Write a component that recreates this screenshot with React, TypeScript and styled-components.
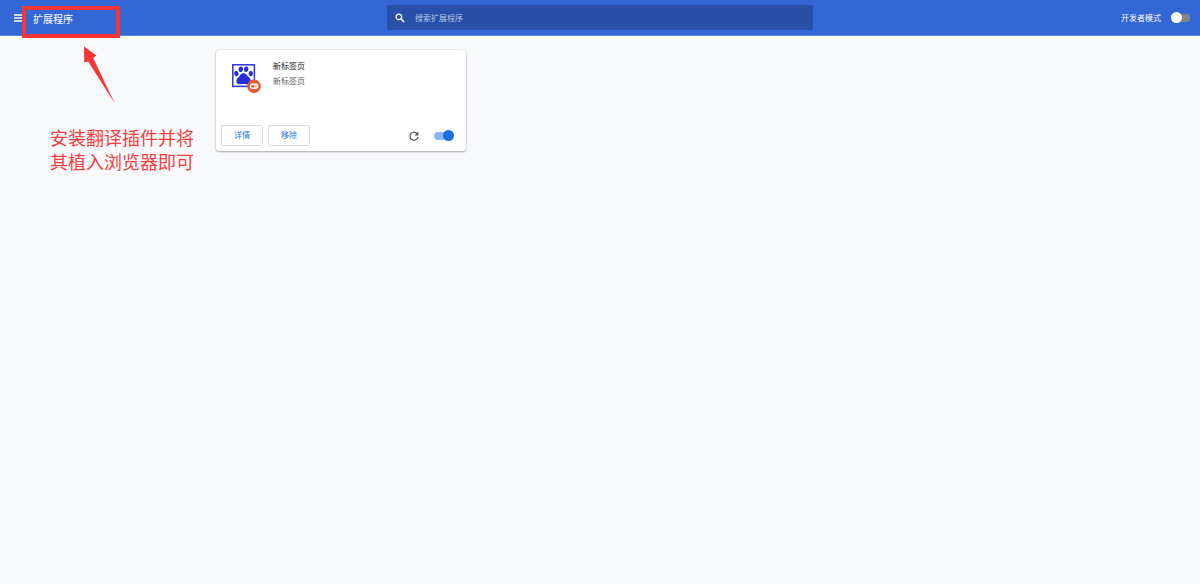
import React from "react";
import styled, { createGlobalStyle } from "styled-components";

const GlobalStyle = createGlobalStyle`
  *, *::before, *::after { box-sizing: border-box; }
  html, body { margin: 0; padding: 0; background: #f8f9fb; }
  body, button, input {
    font-family: "Noto Sans CJK SC", "Liberation Sans", sans-serif;
    font-size: 8px;
  }
`;

const Page = styled.div`
  position: relative;
  min-height: 100vh;
`;

const Toolbar = styled.header`
  display: grid;
  grid-template-columns: 1fr minmax(0, 426px) 1fr;
  align-items: center;
  height: 36px;
  padding: 0 9px;
  background: #3367d6;
  border-bottom: 1px solid #5c86de;
  color: #fff;
`;

const Brand = styled.div`
  display: flex;
  align-items: center;
  gap: 10px;
  padding-left: 4px;
`;

const MenuButton = styled.button`
  display: flex;
  padding: 0;
  border: 0;
  background: none;
  color: inherit;
  cursor: pointer;
`;

const Title = styled.h1`
  margin: 0;
  padding-top: 2px;
  font-size: 10px;
  font-weight: 400;
  line-height: 16px;
`;

const SearchBox = styled.label`
  display: flex;
  align-items: center;
  gap: 10px;
  height: 25px;
  padding: 0 8px;
  border-radius: 1px;
  background: #2950a8;
`;

const SearchInput = styled.input`
  flex: 1;
  min-width: 0;
  height: 16px;
  padding: 0;
  border: 0;
  outline: 0;
  background: none;
  color: #fff;
  &::placeholder { color: #b4c4e6; opacity: 1; }
`;

const DevMode = styled.label`
  display: flex;
  justify-content: flex-end;
  align-items: center;
  gap: 10px;
  line-height: 16px;
`;

const Switch = styled.input<{ $track: string; $knob: string }>`
  appearance: none;
  display: flex;
  align-items: center;
  width: 20px;
  height: 11px;
  margin: 0;
  cursor: pointer;
  &::before {
    content: "";
    flex: none;
    width: 17px;
    height: 8px;
    margin-left: 2px;
    border-radius: 4px;
    background: ${(p) => p.$track};
  }
  &::after {
    content: "";
    flex: none;
    width: 11px;
    height: 11px;
    margin-left: -19px;
    border-radius: 50%;
    background: ${(p) => p.$knob};
  }
  &:checked::before { margin-left: 0; }
  &:checked::after { margin-left: -8px; }
`;

const CardGrid = styled.main`
  display: grid;
  grid-template-columns: repeat(auto-fill, 250px);
  gap: 9px;
  max-width: 768px;
  margin: 0 auto;
  padding-top: 14px;
`;

const Card = styled.article`
  display: flex;
  flex-direction: column;
  min-height: 101px;
  border-radius: 3px;
  background: #fff;
  box-shadow: 0 1px 2px rgba(60, 64, 67, 0.4), 0 0 2px rgba(60, 64, 67, 0.2);
`;

const CardBody = styled.div`
  display: flex;
  flex: 1;
  gap: 11px;
  padding: 8px 16px 0;
`;

const Name = styled.h2`
  margin: 0;
  font-size: 8px;
  font-weight: 400;
  line-height: 15px;
  color: #202124;
`;

const Description = styled.p`
  margin: 0;
  line-height: 15px;
  color: #5f6368;
`;

const CardActions = styled.div`
  display: flex;
  align-items: center;
  gap: 5px;
  padding: 0 12px 5px 5px;
`;

const ActionButton = styled.button`
  width: 42px;
  height: 21px;
  padding: 0 0 2px;
  border: 1px solid #dadce0;
  border-radius: 2px;
  background: #fff;
  color: #1a73e8;
  line-height: 16px;
  cursor: pointer;
`;

const ReloadButton = styled.button`
  display: flex;
  margin-left: auto;
  margin-right: 10px;
  padding: 0;
  border: 0;
  background: none;
  color: #505458;
  cursor: pointer;
`;

const AppIcon = styled.svg`
  flex: none;
  margin-top: 5px;
`;

const Highlight = styled.div`
  position: absolute;
  left: 22px;
  top: 6px;
  width: 98px;
  height: 32px;
  border: 4px solid #f43636;
  pointer-events: none;
`;

const Arrow = styled.svg`
  position: absolute;
  left: 82px;
  top: 46px;
`;

const Note = styled.p`
  position: absolute;
  left: 50px;
  top: 125px;
  margin: 0;
  font-size: 18px;
  line-height: 24px;
  color: #f43f3f;
`;

export default function App() {
  return (
    <Page>
      <GlobalStyle />
      <Toolbar>
        <Brand>
          <MenuButton aria-label="菜单">
            <svg width="10" height="10" viewBox="0 0 10 10" stroke="currentColor" strokeWidth="1.3">
              <path d="M1 2h8M1 5h8M1 8h8" />
            </svg>
          </MenuButton>
          <Title>扩展程序</Title>
        </Brand>
        <SearchBox>
          <svg width="10" height="10" viewBox="0 0 10 10" fill="none" stroke="#fff" strokeWidth="1.3">
            <circle cx="3.9" cy="3.9" r="2.8" />
            <path d="M6 6l3.3 3.3" />
          </svg>
          <SearchInput type="search" placeholder="搜索扩展程序" aria-label="搜索扩展程序" />
        </SearchBox>
        <DevMode>
          开发者模式
          <Switch type="checkbox" role="switch" $track="#80868b" $knob="#fff" />
        </DevMode>
      </Toolbar>

      <CardGrid>
        <Card>
          <CardBody>
            <AppIcon width="30" height="31" viewBox="0 0 30 31" aria-hidden="true">
              <rect x="0.8" y="1.8" width="21.6" height="21.6" fill="#fff" stroke="#2a36dc" strokeWidth="1.5" />
              <g fill="#2430dc">
                <ellipse cx="4.4" cy="10.6" rx="2.200" ry="2.600" transform="rotate(-12 4.4 10.6)" />
                <ellipse cx="8.800" cy="6.200" rx="2.200" ry="2.800" />
                <ellipse cx="14.200" cy="6.200" rx="2.200" ry="2.800" transform="rotate(8 14.2 6.2)" />
                <ellipse cx="18.800" cy="10.600" rx="2.200" ry="2.600" transform="rotate(10 18.8 10.6)" />
                <path d="M11.500 10.200c2.800 0 3.600 2.400 5.200 3.900 1.700 1.500 2.600 2.900 1.900 5-.7 2.200-2.900 2.500-4.800 2.100-1.500-.3-3-.3-4.500 0-2 .4-4.300.1-4.900-2.100-.5-2.200.5-3.500 2.100-4.900 1.600-1.500 2.300-4 5-4z" />
              </g>
              <circle cx="22" cy="23.300" r="6.800" fill="#ea5733" />
              <rect x="18" y="20.500" width="8.200" height="5.600" rx="1.800" fill="#fff" />
              <circle cx="20.800" cy="23.300" r="1.500" fill="#ea5733" />
              <path d="M22.800 21.800h2v3h-2z" fill="#f6b5a2" />
            </AppIcon>
            <div>
              <Name>新标签页</Name>
              <Description>新标签页</Description>
            </div>
          </CardBody>
          <CardActions>
            <ActionButton>详情</ActionButton>
            <ActionButton>移除</ActionButton>
            <ReloadButton aria-label="重新加载">
              <svg width="10" height="10" viewBox="0 0 10 10" fill="none">
                <path d="M8.300 3A4 4 0 1 0 8.900 6" stroke="currentColor" strokeWidth="1.200" />
                <path d="M9.400.6v3.800H5.600z" fill="currentColor" />
              </svg>
            </ReloadButton>
            <Switch type="checkbox" role="switch" aria-label="启用" defaultChecked $track="#8ab4f8" $knob="#1a6fe0" />
          </CardActions>
        </Card>
      </CardGrid>

      <Highlight />
      <Arrow width="34" height="58" viewBox="0 0 34 58" aria-hidden="true">
        <path d="M2 .5L14.500 9.500 11.200 12 32.800 57.500 6.200 15.500 2.200 16.500z" fill="#f43636" />
      </Arrow>
      <Note>
        安装翻译插件并将
        <br />
        其植入浏览器即可
      </Note>
    </Page>
  );
}
